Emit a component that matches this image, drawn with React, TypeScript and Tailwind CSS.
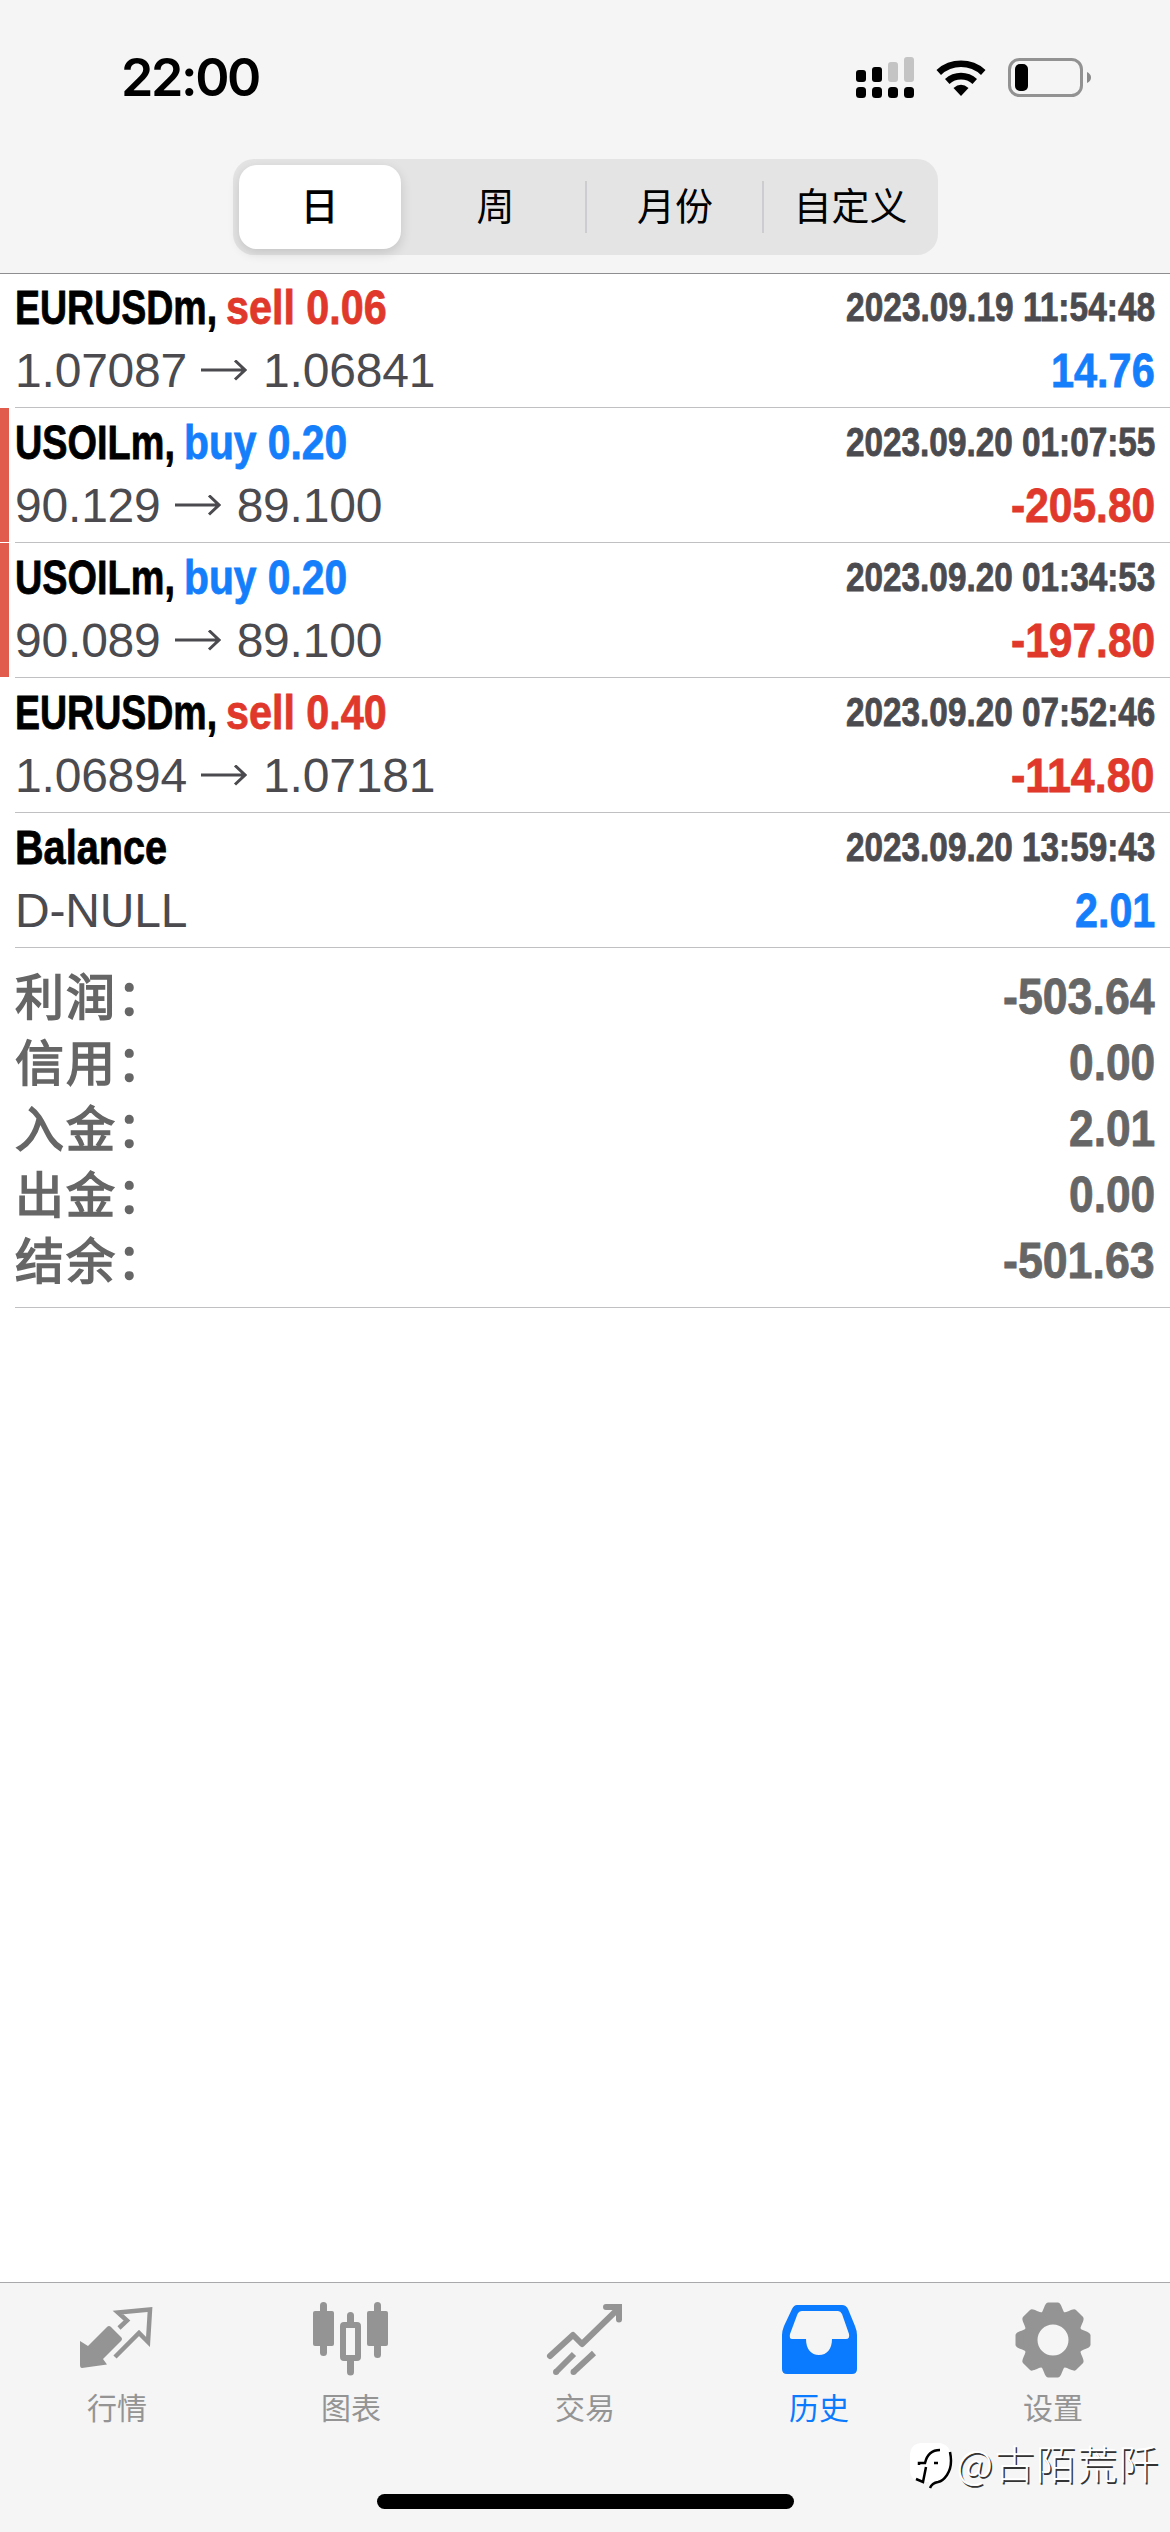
import React, { useLayoutEffect, useRef, useState } from "react";

type Deal = {
  symbol: string;
  symbolWidth: number;
  side?: "buy" | "sell";
  sideText?: string;
  sideWidth?: number;
  from: string;
  to?: string;
  time: string;
  profit: string;
  profitWidth: number;
  stopped?: boolean;
};

const deals: Deal[] = [
  { symbol: "EURUSDm,", symbolWidth: 202, side: "sell", sideText: "sell 0.06", sideWidth: 161, from: "1.07087", to: "1.06841", time: "2023.09.19 11:54:48", profit: "14.76", profitWidth: 104 },
  { symbol: "USOILm,", symbolWidth: 160, side: "buy", sideText: "buy 0.20", sideWidth: 163, from: "90.129", to: "89.100", time: "2023.09.20 01:07:55", profit: "-205.80", profitWidth: 144, stopped: true },
  { symbol: "USOILm,", symbolWidth: 160, side: "buy", sideText: "buy 0.20", sideWidth: 163, from: "90.089", to: "89.100", time: "2023.09.20 01:34:53", profit: "-197.80", profitWidth: 144, stopped: true },
  { symbol: "EURUSDm,", symbolWidth: 202, side: "sell", sideText: "sell 0.40", sideWidth: 161, from: "1.06894", to: "1.07181", time: "2023.09.20 07:52:46", profit: "-114.80", profitWidth: 144 },
  { symbol: "Balance", symbolWidth: 152, from: "D-NULL", time: "2023.09.20 13:59:43", profit: "2.01", profitWidth: 80 },
];

const totals = [
  { label: "利润：", value: "-503.64", width: 152 },
  { label: "信用：", value: "0.00", width: 86 },
  { label: "入金：", value: "2.01", width: 86 },
  { label: "出金：", value: "0.00", width: 86 },
  { label: "结余：", value: "-501.63", width: 152 },
];

// Condensed text: squeezes the string into the given width
const Narrow: React.FC<{ width: number; className?: string; children: string }> = ({ width, className = "", children }) => {
  const ref = useRef<HTMLSpanElement>(null);
  const [scale, setScale] = useState(1);

  useLayoutEffect(() => {
    if (ref.current) setScale(width / ref.current.offsetWidth);
  }, [width, children]);

  return (
    <span className="block shrink-0 whitespace-nowrap" style={{ width }}>
      <span
        ref={ref}
        className={`inline-block origin-left font-bold [-webkit-text-stroke:0.8px_currentColor] ${className}`}
        style={{ transform: `scaleX(${scale})` }}
      >
        {children}
      </span>
    </span>
  );
};

const StatusBar: React.FC = () => (
  <div className="flex h-[159px] items-start justify-between pl-[121px] pr-[78px]">
    <span className="mt-[48px] font-['Inter'] text-[52px] leading-[60px] font-semibold tracking-[-2.4px]">22:00</span>
    <div className="mt-[56px] flex">
      <svg className="h-[44px] w-[60px]" viewBox="0 0 60 44">
        <rect x="1" y="14" width="10" height="12" rx="3" />
        <rect x="17" y="11" width="10" height="15" rx="3" />
        <rect x="33" y="6" width="10" height="20" rx="3" fill="#c4c4c4" />
        <rect x="49" y="1" width="10" height="25" rx="3" fill="#c4c4c4" />
        <rect x="1" y="31" width="10" height="11" rx="3.5" />
        <rect x="17" y="31" width="10" height="11" rx="3.5" />
        <rect x="33" y="31" width="10" height="11" rx="3.5" />
        <rect x="49" y="31" width="10" height="11" rx="3.5" />
      </svg>
      <svg className="ml-[21px] h-[44px] w-[50px]" viewBox="0 0 50 44">
        <path d="M0.5 14 A36 36 0 0 1 49.5 14 L45 19 A29 29 0 0 0 5 19 Z" />
        <path d="M9 23 A23.500 23.500 0 0 1 41 23 L36.500 28 A17 17 0 0 0 13.500 28 Z" />
        <path d="M17.500 32 Q25 25.500 32.500 32 L25 40 Z" />
      </svg>
      <svg className="ml-[22px] h-[44px] w-[84px]" viewBox="0 0 84 44">
        <rect x="1.500" y="3.500" width="72" height="36" rx="10" fill="none" stroke="#929292" strokeWidth="3" />
        <rect x="7" y="8" width="13" height="27" rx="5" />
        <path d="M79 16 Q83 18 83 21.500 Q83 25 79 27 Z" fill="#8a8a8a" />
      </svg>
    </div>
  </div>
);

const PeriodSwitch: React.FC = () => (
  <div className="mx-auto flex h-24 w-[705px] rounded-[21px] bg-[#e4e4e5] text-[38px]">
    <button className="m-1.5 mr-0 flex w-[162px] items-center justify-center rounded-[18px] bg-white font-medium shadow-[0_4px_12px_rgba(0,0,0,0.14)]">
      日
    </button>
    <button className="flex w-[184px] items-center justify-center pl-1.5">周</button>
    <i className="my-[22px] w-[2px] bg-[#cdcdd0]" />
    <button className="flex w-[175px] items-center justify-center pl-0.5">月份</button>
    <i className="my-[22px] w-[2px] bg-[#cdcdd0]" />
    <button className="flex w-[174px] items-center justify-center">自定义</button>
  </div>
);

const DealRow: React.FC<{ deal: Deal }> = ({ deal }) => (
  <div className="relative h-[135px] pl-[15px] first:h-[134px]">
    {deal.stopped && <div className="absolute top-0 bottom-px left-0 w-[9px] bg-[#e25c4d]" />}
    <div className="flex h-full flex-col justify-end border-b border-[#c0c0c2] pr-[15px] pb-[5px]">
      <div className="flex h-[63px] justify-between leading-[63px]">
        <div className="flex gap-[9px] text-[49px]">
          <Narrow width={deal.symbolWidth}>{deal.symbol}</Narrow>
          {deal.sideText && (
            <Narrow width={deal.sideWidth ?? 160} className={deal.side === "buy" ? "text-[#147efb]" : "text-[#e0382b]"}>
              {deal.sideText}
            </Narrow>
          )}
        </div>
        <Narrow width={309} className="text-[40px] text-[#4b4b4f]">{deal.time}</Narrow>
      </div>
      <div className="flex h-[63px] justify-between leading-[63px]">
        <div className="flex items-center text-[48px] tracking-[-0.2px] text-[#4b4b4f]">
          <span>{deal.from}</span>
          {deal.to && (
            <>
              <svg className="mr-[16px] ml-[14px] h-[22px] w-[46px]" viewBox="0 0 46 22" fill="none" stroke="currentColor" strokeWidth="3">
                <path d="M0 10H44M34 0.500L44 10L34 19.500" />
              </svg>
              <span>{deal.to}</span>
            </>
          )}
        </div>
        <Narrow width={deal.profitWidth} className={deal.profit.startsWith("-") ? "text-[49px] text-[#e0382b]" : "text-[49px] text-[#147efb]"}>
          {deal.profit}
        </Narrow>
      </div>
    </div>
  </div>
);

const Totals: React.FC = () => (
  <div className="ml-[15px] h-[360px] border-b border-[#c0c0c2] pt-[16px] pr-[15px] text-[#666]">
    {totals.map((t) => (
      <div key={t.label} className="flex h-[66px] justify-between leading-[66px]">
        <span className="-mt-[3px] font-['Noto_Sans_CJK_SC'] text-[49px] tracking-[2px] [-webkit-text-stroke:1.6px_currentColor]">
          {t.label}
        </span>
        <Narrow width={t.width} className="text-[50px]">{t.value}</Narrow>
      </div>
    ))}
  </div>
);

const QuotesIcon = () => (
  <svg className="h-[78px] w-[78px]" viewBox="1 -2 78 78" fill="currentColor">
    <path d="M3 36L11 41L30 22Q32 20 34 22L44 32Q46 34 44 36L26 54L30 59.500L5 63Q3 63 3 60Z" />
    <path d="M42 23L50 15.500L41 7.500L73 4.500L71 37L62 28L38 52" fill="none" stroke="currentColor" strokeWidth="4.500" />
  </svg>
);

const ChartIcon = () => (
  <svg className="h-[78px] w-[78px] overflow-visible" viewBox="1 0 78 78" fill="currentColor">
    <rect x="9" y="-1" width="7" height="54" rx="3.500" />
    <rect x="2" y="8" width="21" height="35" rx="2" />
    <rect x="63" y="-1" width="7" height="56" rx="3.500" />
    <rect x="56" y="8" width="21" height="35" rx="2" />
    <path d="M36 12.500a3.500 3.500 0 0 1 7 0V19H36Z" />
    <path d="M36 56H43V69a3.500 3.500 0 0 1-7 0Z" />
    <rect x="32" y="22" width="15" height="33" rx="1" fill="none" stroke="currentColor" strokeWidth="6" />
  </svg>
);

const TradeIcon = () => (
  <svg className="h-[78px] w-[78px]" viewBox="0 0 78 78" fill="none" stroke="currentColor" strokeWidth="6">
    <path d="M4 53L27 32L36 41L72 6" strokeLinecap="round" strokeLinejoin="round" />
    <path d="M60 4H73V16.500" strokeLinecap="round" />
    <path d="M10 69L28 51M27.500 69L48 50" />
    <path d="M10 69h0M27.500 69h0" strokeLinecap="round" />
  </svg>
);

const HistoryIcon = () => (
  <svg className="h-[78px] w-[78px]" viewBox="0 0 78 78">
    <path
      fill="currentColor"
      fillRule="evenodd"
      d="M17 2H62Q66 2 68 6L75 23Q77 28 77 32V66Q77 71 72 71H7Q2 71 2 66V32Q2 28 4 23L12 6Q14 2 17 2ZM22 8Q19 8 17.500 11L10 31Q9 36 12 36H26C26 46 31 52 39 52C47 52 52 46 52 36H66Q70 36 69 31L62 11Q60.500 8 58 8Z"
    />
  </svg>
);

const SettingsIcon = () => (
  <svg className="h-[78px] w-[78px] overflow-visible" viewBox="-39 -37 78 78" fill="currentColor">
    {[0, 45, 90, 135, 180, 225, 270, 315].map((a) => (
      <path key={a} transform={`rotate(${a})`} d="M-13-26C-9-28-9-37-5-37.500H5C9-37 9-28 13-26L10-18H-10Z" />
    ))}
    <circle r="22.500" fill="none" stroke="currentColor" strokeWidth="14" />
  </svg>
);

const tabs = [
  { label: "行情", Icon: QuotesIcon },
  { label: "图表", Icon: ChartIcon },
  { label: "交易", Icon: TradeIcon },
  { label: "历史", Icon: HistoryIcon, active: true },
  { label: "设置", Icon: SettingsIcon },
];

const App: React.FC = () => {
  return (
    <div className="relative flex h-[2532px] w-[1170px] flex-col overflow-hidden bg-white font-['Liberation_Sans','Noto_Sans_CJK_SC',sans-serif] text-black">
      <header className="h-[274px] border-b border-[#8e8e90] bg-[#f5f5f5]">
        <StatusBar />
        <PeriodSwitch />
      </header>

      <main className="flex-1">
        <section>
          {deals.map((d, i) => (
            <DealRow key={i} deal={d} />
          ))}
        </section>
        <Totals />
      </main>

      <footer className="h-[250px] border-t border-[#a9a9ab] bg-[#f5f5f5]">
        <nav className="flex">
          {tabs.map(({ label, Icon, active }) => (
            <a key={label} className={`flex w-1/5 flex-col items-center pt-5 ${active ? "text-[#0a7aff]" : "text-[#949494]"}`}>
              <Icon />
              <span className="mt-2 text-[30px] leading-10">{label}</span>
            </a>
          ))}
        </nav>
        <div className="mx-auto mt-[65px] h-[15px] w-[417px] rounded-full bg-black" />
      </footer>

      {/* Author mark */}
      <div className="absolute right-[10px] bottom-[41px] flex items-center font-['Noto_Sans_CJK_SC'] text-[40px] leading-[56px] font-light text-white [text-shadow:1.5px_1.5px_0.5px_#333]">
        <svg className="mt-2 mr-1 h-[50px] w-[44px]" viewBox="0 0 44 50">
          <path d="M12 2H30Q42 3 42 18V26Q42 40 30 41L21 46L20 41H12Q1 40 1 28V15Q1 3 12 2Z" fill="#fff" />
          <path d="M41 11Q44 25 38 34Q34 40 29 41Q23 42 21 47M7 38L14 41L17 26M10 24V22H16Q19 9 31 9M25 22h4" fill="none" stroke="#000" strokeWidth="2.5" />
        </svg>
        <span className="tracking-[1.4px]">@古陌荒阡</span>
      </div>
    </div>
  );
};

export default App;
